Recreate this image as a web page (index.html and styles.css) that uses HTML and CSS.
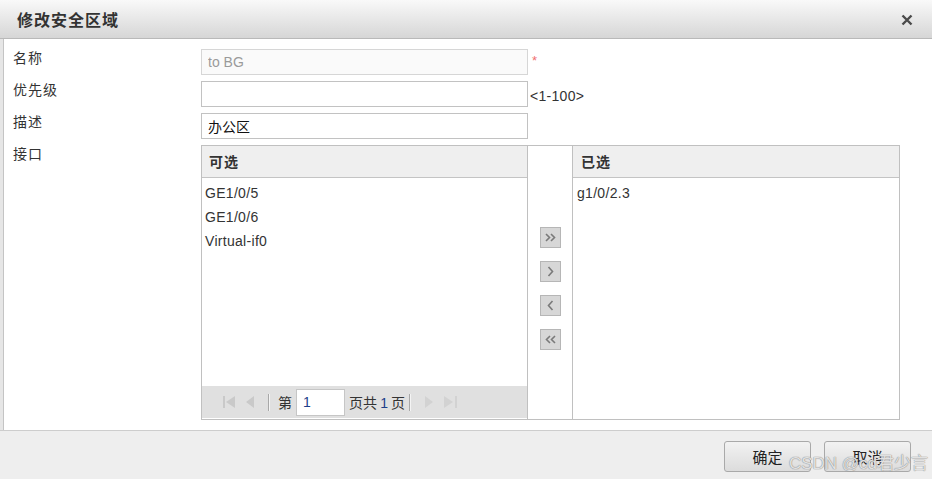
FILE: index.html
```html
<!DOCTYPE html>
<html lang="zh-CN">
<head>
    <meta charset="UTF-8">
    <title>修改安全区域</title>
    <link rel="stylesheet" href="styles.css">
</head>
<body>
    <div class="dialog">
        <div class="titlebar">
            <span class="title">修改安全区域</span>
            <span class="close">
                <svg width="12" height="12" viewBox="0 0 12 12"><path d="M1.5 1.5 L10.5 10.5 M10.5 1.5 L1.5 10.5" stroke="#4a4a4a" stroke-width="2.4"/></svg>
            </span>
        </div>

        <div class="main">
            <div class="form">
                <label class="label">名称</label>
                <div class="field">
                    <input class="text readonly" type="text" value="to BG">
                    <span class="required">*</span>
                </div>

                <label class="label">优先级</label>
                <div class="field">
                    <input class="text" type="text" value="">
                    <span class="hint">&lt;1-100&gt;</span>
                </div>

                <label class="label">描述</label>
                <div class="field">
                    <input class="text" type="text" value="办公区">
                </div>

                <label class="label">接口</label>
                <div class="transfer">
                    <div class="pane left-pane">
                        <div class="pane-head">可选</div>
                        <ul class="pane-list">
                            <li>GE1/0/5</li>
                            <li>GE1/0/6</li>
                            <li>Virtual-if0</li>
                        </ul>
                        <div class="pager">
                            <svg class="pg-icon" width="14" height="16" viewBox="0 0 14 16"><rect x="1" y="2" width="2" height="12" fill="#c9c9c9"/><path d="M13 2 L4 8 L13 14 Z" fill="#c9c9c9"/></svg>
                            <svg class="pg-icon" width="12" height="16" viewBox="0 0 12 16"><path d="M10 2 L2 8 L10 14 Z" fill="#c9c9c9"/></svg>
                            <span class="pg-sep"></span>
                            <span class="pg-text">第</span>
                            <input class="pg-input" type="text" value="1">
                            <span class="pg-text">页共 <b class="num">1</b> 页</span>
                            <span class="pg-sep end"></span>
                            <svg class="pg-icon" width="12" height="16" viewBox="0 0 12 16"><path d="M2 2 L10 8 L2 14 Z" fill="#d2d2d2"/></svg>
                            <svg class="pg-icon" width="15" height="16" viewBox="0 0 15 16"><path d="M1 2 L10 8 L1 14 Z" fill="#d2d2d2"/><rect x="12" y="2" width="2" height="12" fill="#d2d2d2"/></svg>
                        </div>
                    </div>

                    <div class="movers">
                        <button class="mover"><svg width="11" height="9" viewBox="0 0 11 9"><path d="M1 1 L4.5 4.5 L1 8 M6 1 L9.5 4.5 L6 8" fill="none" stroke="#7a7a7a" stroke-width="1.6"/></svg></button>
                        <button class="mover"><svg width="7" height="11" viewBox="0 0 7 11"><path d="M1.5 1 L5.5 5.5 L1.5 10" fill="none" stroke="#7a7a7a" stroke-width="1.6"/></svg></button>
                        <button class="mover"><svg width="7" height="11" viewBox="0 0 7 11"><path d="M5.5 1 L1.5 5.5 L5.5 10" fill="none" stroke="#7a7a7a" stroke-width="1.6"/></svg></button>
                        <button class="mover"><svg width="11" height="9" viewBox="0 0 11 9"><path d="M5 1 L1.5 4.5 L5 8 M10 1 L6.5 4.5 L10 8" fill="none" stroke="#7a7a7a" stroke-width="1.6"/></svg></button>
                    </div>

                    <div class="pane right-pane">
                        <div class="pane-head">已选</div>
                        <ul class="pane-list">
                            <li>g1/0/2.3</li>
                        </ul>
                    </div>
                </div>
            </div>
        </div>

        <div class="footer">
            <button class="btn">确定</button>
            <button class="btn">取消</button>
        </div>

        <div class="watermark">CSDN @cd君少言</div>
    </div>
</body>
</html>
```

FILE: styles.css
```css
* {
    box-sizing: border-box;
}
body {
    margin: 0;
    padding: 0;
    font-family: "Liberation Sans", "Noto Sans CJK SC", sans-serif;
    font-size: 14px;
    color: #333;
    background: #fff;
}
.dialog {
    position: relative;
    width: 932px;
    height: 479px;
    display: flex;
    flex-direction: column;
    background: #e6e6e6;
    overflow: hidden;
}
.titlebar {
    height: 39px;
    display: flex;
    align-items: center;
    justify-content: space-between;
    padding: 0 19px 0 17px;
    background: linear-gradient(#f9f9f9, #d6d6d6);
    border-bottom: 1px solid #b9b9b9;
}
.title {
    font-family: "Noto Sans CJK SC", sans-serif;
    font-size: 16px;
    font-weight: bold;
    letter-spacing: 1px;
    color: #333;
    margin-top: -1px;
}
.close {
    display: flex;
    margin-top: 1px;
}
.main {
    flex: 1;
    margin-left: 3px;
    background: #fff;
    border-left: 1px solid #c4c4c4;
    padding: 10px 0 0 9px;
}
.form {
    display: grid;
    grid-template-columns: 188px auto;
    row-gap: 6px;
    align-items: start;
}
.label {
    font-family: "Noto Sans CJK SC", sans-serif;
    font-size: 14px;
    letter-spacing: 1px;
    line-height: 20px;
    margin-top: -2px;
    color: #333;
}
.field {
    display: flex;
    align-items: center;
}
.text {
    width: 327px;
    height: 26px;
    border: 1px solid #c2c2c2;
    padding: 0 6px;
    font-family: "Liberation Sans", "Noto Sans CJK SC", sans-serif;
    font-size: 14px;
    color: #111;
    outline: none;
}
.text.readonly {
    background: #fafafa;
    border-color: #d6d6d6;
    color: #9a9a9a;
}
.required {
    color: #f07070;
    font-size: 13px;
    margin: -4px 0 0 4px;
}
.hint {
    margin: 4px 0 0 2px;
    font-size: 14px;
    letter-spacing: 0.3px;
    color: #333;
}
.transfer {
    width: 699px;
    height: 275px;
    display: flex;
    border: 1px solid #c0c0c0;
}
.pane {
    display: flex;
    flex-direction: column;
}
.left-pane {
    width: 326px;
    border-right: 1px solid #c0c0c0;
}
.right-pane {
    flex: 1;
}
.pane-head {
    height: 32px;
    line-height: 30px;
    padding-left: 7px;
    background: #efefef;
    border-bottom: 1px solid #c4c4c4;
    font-family: "Noto Sans CJK SC", sans-serif;
    font-weight: bold;
    font-size: 14px;
    letter-spacing: 1px;
    color: #333;
}
.right-pane .pane-head {
    padding-left: 8px;
}
.pane-list {
    flex: 1;
    list-style: none;
    margin: 0;
    padding: 3px 0 0 3px;
}
.right-pane .pane-list {
    padding-left: 4px;
}
.pane-list li {
    height: 24px;
    line-height: 24px;
    font-size: 14px;
    letter-spacing: 0.3px;
    color: #333;
}
.pager {
    height: 32px;
    display: flex;
    align-items: center;
    padding-left: 20px;
    background: #e0e0e0;
    margin-bottom: 1px;
}
.pg-icon {
    margin-right: 8px;
}
.pg-sep {
    width: 2px;
    height: 17px;
    background: #a8a8a8;
    border-right: 1px solid #f4f4f4;
    margin: 0 8px 0 4px;
}
.pg-sep.end {
    margin: 0 12px 0 4px;
}
.pg-text {
    font-family: "Noto Sans CJK SC", sans-serif;
    font-size: 14px;
    color: #333;
}
.pg-text .num {
    font-family: "Liberation Sans", sans-serif;
    font-weight: normal;
    color: #1d3f8a;
}
.pg-input {
    width: 49px;
    height: 27px;
    margin: 0 4px;
    border: 1px solid #c6c6c6;
    padding: 0 6px;
    font-family: "Liberation Sans", sans-serif;
    font-size: 14px;
    color: #1d3f8a;
    outline: none;
}
.movers {
    width: 45px;
    border-right: 1px solid #c0c0c0;
    display: flex;
    flex-direction: column;
    align-items: center;
    justify-content: center;
    gap: 13px;
    padding-top: 12px;
}
.mover {
    width: 21px;
    height: 21px;
    padding: 0;
    display: flex;
    align-items: center;
    justify-content: center;
    background: #d7d7d7;
    border: 1px solid #b6b6b6;
    cursor: pointer;
}
.footer {
    height: 49px;
    display: flex;
    justify-content: flex-end;
    align-items: flex-start;
    gap: 13px;
    padding: 10px 21px 0 0;
    background: #eeeeee;
    border-top: 1px solid #cdcdcd;
}
.btn {
    width: 87px;
    height: 31px;
    border: 1px solid #a9a9a9;
    border-radius: 3px;
    background: linear-gradient(#f2f2f2, #dcdcdc);
    font-family: "Noto Sans CJK SC", sans-serif;
    font-size: 15px;
    color: #222;
    cursor: pointer;
}
.watermark {
    position: absolute;
    right: 4px;
    bottom: 5px;
    font-family: "Liberation Sans", "Noto Sans CJK SC", sans-serif;
    font-size: 17px;
    color: rgba(255, 255, 255, 0.75);
    text-shadow: 0 0 1px #888, 0 0 1px #888;
}
```
